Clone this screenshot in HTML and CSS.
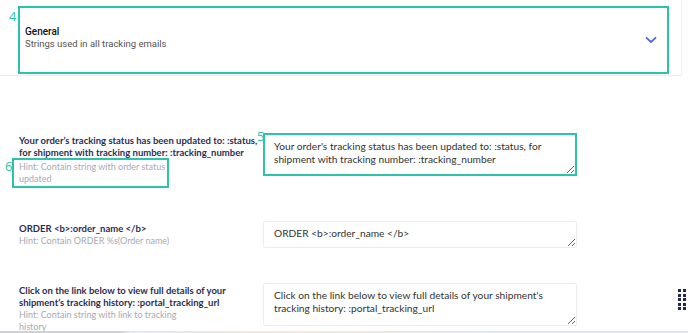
FILE: index.html
```html
<!DOCTYPE html>
<html lang="en">
  <head>
    <meta charset="UTF-8" />
    <meta name="viewport" content="width=device-width, initial-scale=1.0" />
    <title>Tracking email strings</title>
    <link rel="stylesheet" href="styles.css">
  </head>
  <body>
    <div class="card">
      <span class="marker marker-4">4</span>
      <div class="card-head">
        <div>
          <div class="card-title">General</div>
          <div class="card-sub">Strings used in all tracking emails</div>
        </div>
        <svg class="chevron" width="12" height="8" viewBox="0 0 12 8">
          <path d="M1.5 1.8 L6 6 L10.5 1.8" fill="none" stroke="#4b6fd6" stroke-width="1.8" stroke-linecap="round" stroke-linejoin="round" />
        </svg>
      </div>
    </div>

    <div class="settings">
      <div class="row">
        <div class="label-col">
          <div class="label">Your order’s tracking status has been updated to: :status, for shipment with tracking number: :tracking_number</div>
          <div class="hint hint-marked">
            <span class="marker marker-6">6</span>
            Hint: Contain string with order status updated
          </div>
        </div>
        <div class="field-wrap">
          <span class="marker marker-5">5</span>
          <textarea class="field field-marked tall">Your order's tracking status has been updated to: :status, for shipment with tracking number: :tracking_number</textarea>
        </div>
      </div>

      <div class="row">
        <div class="label-col">
          <div class="label">ORDER &lt;b&gt;:order_name &lt;/b&gt;</div>
          <div class="hint hint-wide">Hint: Contain ORDER %s(Order name)</div>
        </div>
        <div class="field-wrap">
          <textarea class="field short">ORDER &lt;b&gt;:order_name &lt;/b&gt;</textarea>
        </div>
      </div>

      <div class="row">
        <div class="label-col">
          <div class="label">Click on the link below to view full details of your shipment’s tracking history: :portal_tracking_url</div>
          <div class="hint">Hint: Contain string with link to tracking history</div>
        </div>
        <div class="field-wrap">
          <textarea class="field tall">Click on the link below to view full details of your shipment's tracking history: :portal_tracking_url</textarea>
        </div>
      </div>
    </div>

    <div class="grip">
      <span></span><span></span><span></span><span></span><span></span>
      <span></span><span></span><span></span><span></span><span></span>
    </div>
    <div class="bottom-strip"></div>
  </body>
</html>
```

FILE: styles.css
```css
body {
  margin: 0;
  width: 688px;
  height: 333px;
  overflow: hidden;
  position: relative;
  background: #fff;
  font-family: Lato, "Open Sans", sans-serif;
}
.marker {
  position: absolute;
  color: #2bc3ad;
  font-family: "Open Sans", sans-serif;
  font-size: 13px;
  line-height: 1;
}
.card {
  position: relative;
  width: 682px;
  height: 76px;
  box-sizing: border-box;
  padding: 6px 0 0 18px;
  border-right: 1px solid #f0f0f2;
  border-bottom: 1px solid #ececef;
}
.marker-4 {
  left: 9px;
  top: 10px;
}
.card-head {
  width: 651px;
  height: 68px;
  box-sizing: border-box;
  border: 2px solid #2bc3ad;
  padding: 0 10px 5px 5px;
  display: flex;
  align-items: center;
  justify-content: space-between;
}
.card-title {
  font-family: Roboto, sans-serif;
  font-weight: 500;
  font-size: 10px;
  color: #111;
}
.card-sub {
  font-family: Roboto, sans-serif;
  font-size: 9.5px;
  color: #555;
  margin-top: 1px;
}
.chevron {
  margin-top: 5px;
}
.settings {
  padding: 57px 0 0 19px;
  display: flex;
  flex-direction: column;
  gap: 35px;
}
.row {
  display: flex;
  align-items: flex-start;
}
.label-col {
  width: 244px;
  padding-top: 2px;
  line-height: 12px;
}
.label {
  font-weight: 700;
  font-size: 9.5px;
  color: #2b2d55;
}
.hint {
  font-size: 9px;
  color: #a9a9b3;
  width: 160px;
}
.hint-wide {
  width: 220px;
}
.hint-marked {
  position: relative;
  width: 150px;
  margin-top: 2px;
  margin-bottom: 1px;
}
.hint-marked::before {
  content: "";
  position: absolute;
  left: -7px;
  top: -3px;
  width: 157px;
  height: 30px;
  border: 2px solid #2bc3ad;
  box-sizing: border-box;
}
.marker-6 {
  left: -14px;
  top: -1px;
}
.field-wrap {
  position: relative;
}
.marker-5 {
  left: -6px;
  top: -3px;
}
.field {
  display: block;
  width: 314px;
  box-sizing: border-box;
  border: 1px solid #ededf0;
  border-radius: 2px;
  padding: 5px 10px;
  font-family: Lato, "Open Sans", sans-serif;
  font-size: 10.2px;
  line-height: 13px;
  color: #333;
  resize: vertical;
  overflow: hidden;
}
.field-marked {
  border: 2px solid #2bc3ad;
  border-radius: 0;
  padding: 5px 9px;
}
.tall {
  height: 43px;
}
.short {
  height: 27px;
}
.grip {
  position: absolute;
  left: 678px;
  top: 289px;
  width: 8px;
  display: grid;
  grid-template-columns: 3px 3px;
  gap: 1.5px 2px;
}
.grip span {
  width: 3px;
  height: 3px;
  background: #23264d;
}
.bottom-strip {
  position: absolute;
  left: 0;
  right: 0;
  bottom: 0;
  height: 2px;
  background: linear-gradient(90deg, #cfcfd4 0, #cfcfd4 120px, #e6e8f2 130px, #f3ecd9 300px, #e3e6f3 500px, #dfe3ef 100%);
}
```
